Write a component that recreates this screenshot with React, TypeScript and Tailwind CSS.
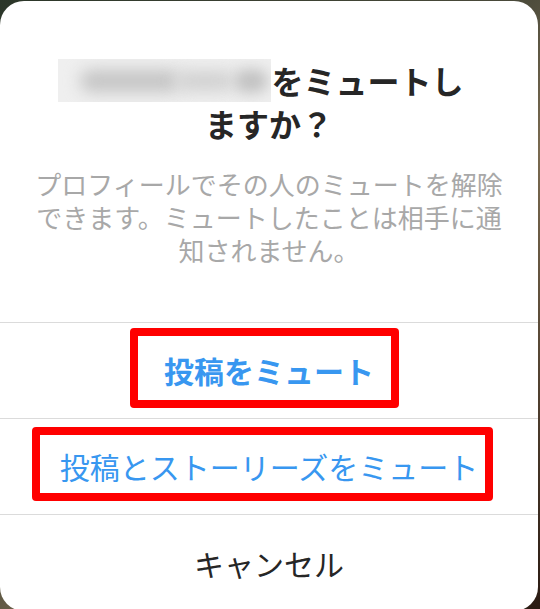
import React from "react";

export default function App() {
  return (
    <div
      lang="ja"
      className="relative h-[609px] w-[540px] overflow-hidden bg-[linear-gradient(135deg,#2b3629_0%,#4a4a3a_45%,#7a6a50_60%,#2a1a12_100%)] font-['Noto_Sans_CJK_JP','Noto_Sans',sans-serif]"
    >
      <div className="mt-[1px] flex h-[610px] w-[538px] flex-col overflow-hidden rounded-[24px] bg-white">
        {/* Header */}
        <div className="h-[321px] shrink-0 pt-[58px]">
          <div className="text-center text-[32px] font-bold leading-[42px] text-[#262626]">
            <div className="flex items-start justify-center pr-[16px]">
              <span className="relative inline-block h-[43px] w-[213px] overflow-hidden bg-[#efefef]">
                <span className="absolute left-[22px] top-[11px] h-[22px] w-[100px] rounded-full bg-[#c4c4c4] blur-[8px]" />
                <span className="absolute left-[118px] top-[12px] h-[20px] w-[58px] rounded-full bg-[#d0d0d0] blur-[8px]" />
                <span className="absolute left-[176px] top-[10px] h-[24px] w-[34px] rounded-full bg-[#c2c2c2] blur-[7px]" />
              </span>
              <span>をミュートし</span>
            </div>
            <div>ますか？</div>
          </div>
          <p className="mt-[23px] px-[30px] text-center text-[26px] leading-[33px] text-[#a8a8a8]">
            プロフィールでその人のミュートを解除できます。ミュートしたことは相手に通知されません。
          </p>
        </div>

        {/* Buttons */}
        <div className="flex h-[96px] shrink-0 items-center justify-center border-t border-[#dbdbdb] text-[30px] font-bold text-[#3897f0]">
          投稿をミュート
        </div>
        <div className="flex h-[96px] shrink-0 items-center justify-center border-t border-[#dbdbdb] text-[30px] text-[#3897f0]">
          投稿とストーリーズをミュート
        </div>
        <div className="flex flex-1 items-center justify-center border-t border-[#dbdbdb] text-[30px] text-[#262626]">
          キャンセル
        </div>
      </div>

      {/* Red annotation boxes */}
      <div className="absolute left-[130px] top-[328px] h-[80px] w-[269px] rounded-[4px] border-[8px] border-[#ff0000]" />
      <div className="absolute left-[32px] top-[427px] h-[74px] w-[461px] rounded-[4px] border-[8px] border-[#ff0000]" />
    </div>
  );
}
